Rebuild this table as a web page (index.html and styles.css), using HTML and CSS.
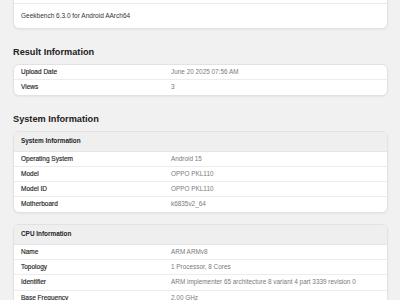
FILE: index.html
```html
<!DOCTYPE html>
<html>
<head>
<meta charset="utf-8">
<link rel="stylesheet" href="styles.css">
</head>
<body>
<div class="card top-card">
  <div class="top-row"></div>
  <div class="note">Geekbench 6.3.0 for Android AArch64</div>
</div>

<h2 class="section-title">Result Information</h2>
<div class="card">
  <div class="row"><span class="label">Upload Date</span><span class="value">June 20 2025 07:56 AM</span></div>
  <div class="row"><span class="label">Views</span><span class="value">3</span></div>
</div>

<h2 class="section-title">System Information</h2>
<div class="card">
  <div class="card-head">System Information</div>
  <div class="row"><span class="label">Operating System</span><span class="value">Android 15</span></div>
  <div class="row"><span class="label">Model</span><span class="value">OPPO PKL110</span></div>
  <div class="row"><span class="label">Model ID</span><span class="value">OPPO PKL110</span></div>
  <div class="row"><span class="label">Motherboard</span><span class="value">k6835v2_64</span></div>
</div>

<div class="card card-gap">
  <div class="card-head">CPU Information</div>
  <div class="row"><span class="label">Name</span><span class="value">ARM ARMv8</span></div>
  <div class="row"><span class="label">Topology</span><span class="value">1 Processor, 8 Cores</span></div>
  <div class="row"><span class="label">Identifier</span><span class="value">ARM implementer 65 architecture 8 variant 4 part 3339 revision 0</span></div>
  <div class="row"><span class="label">Base Frequency</span><span class="value">2.00 GHz</span></div>
</div>
</body>
</html>
```

FILE: styles.css
```css
html, body {
  margin: 0;
  padding: 0;
}
body {
  background: #f1f1f1;
  padding: 0 12px 0 13px;
  font-family: "Liberation Sans", Arial, sans-serif;
  color: #2a2a2a;
  overflow: hidden;
}
.card {
  background: #fff;
  border: 1px solid #e2e2e2;
  border-radius: 6px;
  box-shadow: 0 1px 2px rgba(0, 0, 0, 0.05);
  overflow: hidden;
}
.top-card {
  margin-top: -20px;
}
.top-row {
  height: 22px;
  border-bottom: 1px solid #e9e9e9;
}
.note {
  padding: 8px 7px;
  font-size: 6.5px;
  line-height: 8px;
  color: #333;
}
.section-title {
  margin: 13px 0 2px;
  font-size: 9.2px;
  line-height: 20px;
  font-weight: bold;
  color: #222;
}
.card-head {
  background: #efefef;
  padding: 5.5px 7px;
  line-height: 8px;
  font-size: 6.4px;
  font-weight: bold;
  color: #222;
  border-bottom: 1px solid #e6e6e6;
}
.row {
  display: grid;
  grid-template-columns: 150px 1fr;
  padding: 3px 7px;
  line-height: 8.3px;
  font-size: 6.5px;
  border-bottom: 1px solid #ececec;
}
.row:last-child {
  border-bottom: none;
}
.label {
  color: #262626;
  -webkit-text-stroke: 0.15px #262626;
}
.value {
  color: #7a7a7a;
  font-size: 6.4px;
  white-space: nowrap;
}
.card-gap {
  margin-top: 11px;
}
```
